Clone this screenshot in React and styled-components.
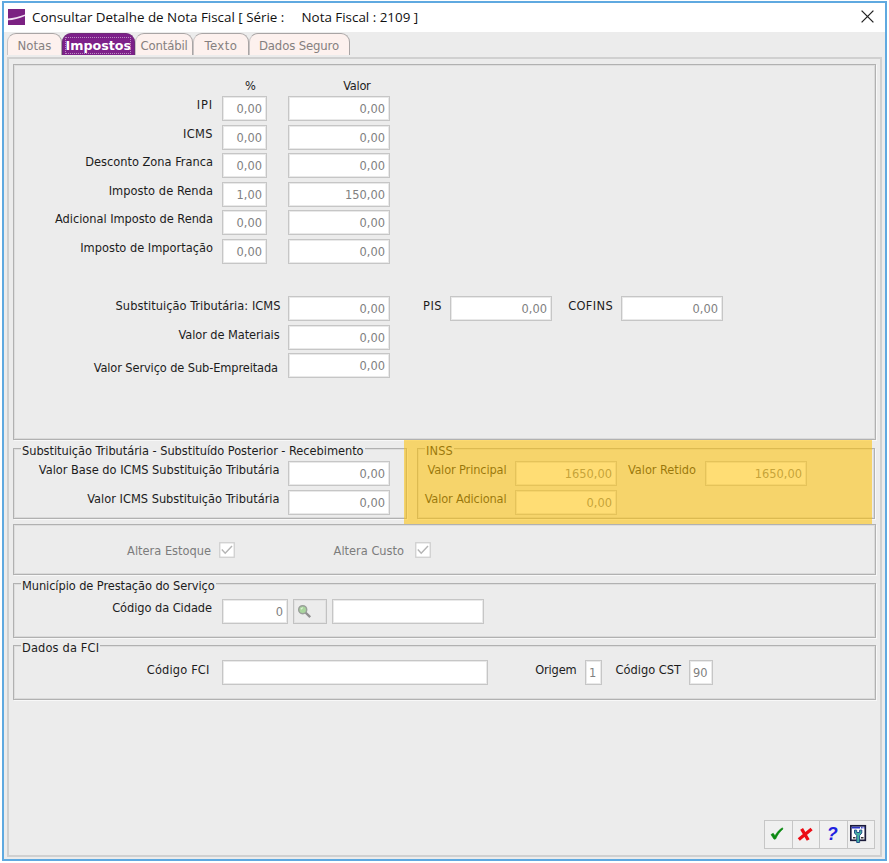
import React from 'react';
import styled, { createGlobalStyle } from 'styled-components';

const GlobalStyle = createGlobalStyle`
  * { box-sizing: border-box; }
  body { margin: 0; background: #fff; overflow: hidden; }
`;

const Window = styled.div`
  width: 885px;
  height: 860px;
  margin: 1px 0 0 2px;
  border: 2px solid #5fa9e0;
  background: #ececec;
  display: flex;
  flex-direction: column;
  font: 12.7px/16px "DejaVu Sans Condensed", "DejaVu Sans", sans-serif;
  color: #1c1c1c;
  white-space: pre;
`;

const TitleBar = styled.header`
  height: 29px;
  flex: none;
  background: #fff;
  display: flex;
  align-items: center;
  padding: 0 11px 0 4px;
  font: 13.4px/20px "Open Sans", "Noto Sans", sans-serif;
  color: #111;
`;

const Title = styled.span`
  width: ${p => p.$w}px;
  padding-bottom: 2px;
`;

const LogoIcon = styled.svg`
  width: 17px;
  height: 16px;
  margin: -2px 7px 0 0;
`;

const CloseIcon = styled.svg`
  width: 13px;
  height: 13px;
  margin: -2px 0 0 auto;
`;

const Tabs = styled.nav`
  height: 25px;
  flex: none;
  display: flex;
  padding: 1px 0 0 3px;
`;

const Tab = styled.div`
  position: relative;
  width: ${p => p.$w}px;
  height: 22px;
  padding: 4px 0 0 ${p => p.$pad}px;
  border: 1.5px solid ${p => (p.$active ? '#6e2a78' : '#a9a5a5')};
  border-bottom: 0;
  border-left-color: ${p => (p.$active ? '#6e2a78' : '#c9c4c4')};
  border-radius: 9px 9px 0 0;
  background: ${p => (p.$active ? '#7d2089' : '#fdf1ee')};
  color: ${p => (p.$active ? '#fff' : '#858080')};
  font-size: 13px;
  letter-spacing: ${p => p.$ls || 0}px;
  ${p => p.$active && `
    font-family: "DejaVu Sans", sans-serif;
    font-weight: bold;
    font-size: 12.7px;
    &::after {
      content: '';
      position: absolute;
      inset: 3px 3px 1px 2px;
      border: 1px dotted #b98cc0;
    }
  `}
`;

const Page = styled.main`
  width: 875px;
  height: 800px;
  margin-left: 3px;
  padding: 5px 4px 0 4px;
  border: 2px solid #d0d0d0;
  display: flex;
  flex-direction: column;
`;

const Panel = styled.section`
  position: relative;
  width: ${p => p.$w || 863}px;
  height: ${p => p.$h}px;
  flex: none;
  margin-top: ${p => p.$mt || 0}px;
  padding-top: ${p => p.$pt || 0}px;
  border: 1px solid #b1b1b1;
  box-shadow: inset 1px 1px 0 #dedede, inset -1px -1px 0 #dadada, 1px 1px 0 #f8f8f8;
`;

const Legend = styled.span`
  position: absolute;
  top: -6px;
  left: 7px;
  padding: 0 1px;
  background: #ececec;
  letter-spacing: ${p => p.$ls || 0}px;
`;

const PanelRow = styled.div`
  display: flex;
  gap: 10px;
`;

const Row = styled.div`
  display: flex;
  align-items: flex-start;
  height: ${p => p.$h || 28.5}px;
`;

const Label = styled.label`
  width: ${p => p.$w}px;
  margin: ${p => p.$mt ?? 1}px ${p => p.$gap ?? 9}px 0 0;
  text-align: right;
  letter-spacing: ${p => p.$ls || 0}px;
  color: ${p => (p.$muted ? '#7c7c7c' : 'inherit')};
`;

const Field = styled.div`
  width: ${p => p.$w}px;
  height: 25px;
  flex: none;
  margin-right: ${p => p.$gap || 0}px;
  padding: 4px 4px 0 3px;
  border: 1px solid #c6c6c6;
  box-shadow: inset 0 0 0 1px #e9e9e9;
  background: #fff;
  color: #808080;
  text-align: ${p => (p.$left ? 'left' : 'right')};
`;

const Headings = styled.div`
  display: flex;
  height: 18px;
`;

const Heading = styled.span`
  width: ${p => p.$w}px;
  text-align: right;
  letter-spacing: -0.3px;
`;

const Highlight = styled.div`
  position: absolute;
  left: -14px;
  top: -9px;
  width: 468px;
  height: 85px;
  background: rgba(255, 193, 2, 0.55);
`;

const CheckBox = styled.svg`
  width: 16px;
  height: 16px;
  flex: none;
`;

const LookupButton = styled.div`
  width: 34px;
  height: 25px;
  margin-right: 5px;
  padding: 4px 0 0 3px;
  border: 1px solid #c2c2c2;
  box-shadow: inset 0 0 0 1px #e2e2e2;
`;

const Actions = styled.footer`
  display: flex;
  width: 111px;
  height: 29px;
  margin: auto 1px 6px auto;
  border: 1px solid #c6c6c6;
  background: #f0f0f0;
`;

const Action = styled.div`
  flex: 1;
  display: flex;
  align-items: center;
  justify-content: center;
  padding: 0 2px 2px 0;
  & + & { border-left: 1px solid #c6c6c6; }
`;

const HelpMark = styled.span`
  font: italic bold 18px/20px "Liberation Sans", sans-serif;
  color: #2020e0;
`;

const TAXES = [
  ['IPI', '0,00', '0,00', 0.9],
  ['ICMS', '0,00', '0,00', 0.4],
  ['Desconto Zona Franca', '0,00', '0,00', 0],
  ['Imposto de Renda', '1,00', '150,00', 0.05],
  ['Adicional Imposto de Renda', '0,00', '0,00', -0.04],
  ['Imposto de Importação', '0,00', '0,00', 0],
];

const Checked = () => (
  <CheckBox viewBox="0 0 16 16">
    <rect x="0.75" y="0.75" width="14.5" height="14.5" fill="#fff" stroke="#cfcfcf" strokeWidth="1.3" />
    <path d="M2.8 7.6 6.2 11.2 13 4" fill="none" stroke="#b4b4b4" strokeWidth="1.4" />
  </CheckBox>
);

export default function App() {
  return (
    <>
      <GlobalStyle />
      <Window>
        <TitleBar>
          <LogoIcon viewBox="0 0 17 16">
            <rect width="17" height="16" fill="#7b2182" />
            <path d="M0 9.600C5 9.400 11 7.600 17 5.600v1.300C11 9.400 5 11 0 11.200z" fill="#f1dff2" />
          </LogoIcon>
          <Title $w={269.5}>Consultar Detalhe de Nota Fiscal [ Série :</Title>
          <Title $w={120}>Nota Fiscal : 2109 ]</Title>
          <CloseIcon viewBox="0 0 13 13">
            <path d="M0.6 0.6 12.4 12.4M12.4 0.6 0.6 12.4" stroke="#222" strokeWidth="1.3" />
          </CloseIcon>
        </TitleBar>

        <Tabs>
          <Tab $w={55} $pad={9.5}>Notas</Tab>
          <Tab $w={73} $pad={2.5} $active>Impostos</Tab>
          <Tab $w={58} $pad={4.5} $ls={-0.15}>Contábil</Tab>
          <Tab $w={56} $pad={10.5} $ls={0.45}>Texto</Tab>
          <Tab $w={101} $pad={9} $ls={-0.15}>Dados Seguro</Tab>
        </Tabs>

        <Page>
          <Panel $h={376} $pt={13}>
            <Headings>
              <Heading $w={241.5}>%</Heading>
              <Heading $w={115}>Valor</Heading>
            </Headings>
            {TAXES.map(([name, pct, value, ls]) => (
              <Row key={name}>
                <Label $w={199} $gap={9} $ls={ls}>{name}</Label>
                <Field $w={45} $gap={21}>{pct}</Field>
                <Field $w={102}>{value}</Field>
              </Row>
            ))}
            <Row $h={29} />
            <Row>
              <Label $w={266.5} $gap={7.5} $ls={0.04} $mt={2}>Substituição Tributária: ICMS</Label>
              <Field $w={102} $gap={32}>0,00</Field>
              <Label $w={20} $gap={8} $ls={0.5} $mt={2}>PIS</Label>
              <Field $w={102} $gap={15}>0,00</Field>
              <Label $w={46} $gap={8} $ls={0.35} $mt={2}>COFINS</Label>
              <Field $w={102}>0,00</Field>
            </Row>
            <Row>
              <Label $w={265.5} $gap={8.5} $ls={-0.09} $mt={2}>Valor de Materiais</Label>
              <Field $w={102}>0,00</Field>
            </Row>
            <Row>
              <Label $w={264} $gap={10} $ls={-0.11} $mt={7}>Valor Serviço de Sub-Empreitada</Label>
              <Field $w={102}>0,00</Field>
            </Row>
          </Panel>

          <PanelRow>
            <Panel $w={394} $h={71} $mt={8} $pt={12}>
              <Legend $ls={-0.04}>Substituição Tributária - Substituído Posterior - Recebimento</Legend>
              <Row>
                <Label $w={265.5} $gap={8.5} $ls={-0.02}>Valor Base do ICMS Substituição Tributária</Label>
                <Field $w={102}>0,00</Field>
              </Row>
              <Row>
                <Label $w={265.5} $gap={8.5}>Valor ICMS Substituição Tributária</Label>
                <Field $w={102}>0,00</Field>
              </Row>
            </Panel>
            <Panel $w={458} $h={71} $mt={8} $pt={12}>
              <Legend $ls={0.15}>INSS</Legend>
              <Row>
                <Label $w={88.5} $gap={8.5} $ls={-0.13}>Valor Principal</Label>
                <Field $w={102} $gap={11}>1650,00</Field>
                <Label $w={68} $gap={9} $ls={-0.05}>Valor Retido</Label>
                <Field $w={102}>1650,00</Field>
              </Row>
              <Row>
                <Label $w={88.5} $gap={8.5} $ls={-0.15}>Valor Adicional</Label>
                <Field $w={102}>0,00</Field>
              </Row>
              <Highlight />
            </Panel>
          </PanelRow>

          <Panel $h={51} $mt={5} $pt={17}>
            <Row>
              <Label $w={197} $gap={8} $muted>Altera Estoque</Label>
              <Checked />
              <Label $w={169} $gap={11} $muted>Altera Custo</Label>
              <Checked />
            </Row>
          </Panel>

          <Panel $h={55} $mt={8} $pt={15}>
            <Legend $ls={-0.08}>Município de Prestação do Serviço</Legend>
            <Row>
              <Label $w={198} $gap={10} $ls={-0.06}>Código da Cidade</Label>
              <Field $w={66} $gap={5}>0</Field>
              <LookupButton>
                <svg width="16" height="16" viewBox="0 0 16 16">
                  <path d="M8.5 8.5 13.2 13.2" stroke="#8f8f8f" strokeWidth="2.4" />
                  <circle cx="5.7" cy="5.7" r="4" fill="#a9d69d" stroke="#9a9f9a" strokeWidth="1.5" />
                  <path d="M3.8 5.2 5.8 3.6" stroke="#e0f1da" strokeWidth="1.2" />
                </svg>
              </LookupButton>
              <Field $w={152} />
            </Row>
          </Panel>

          <Panel $h={55} $mt={7} $pt={14}>
            <Legend $ls={0.15}>Dados da FCI</Legend>
            <Row>
              <Label $w={195.5} $gap={12.5} $ls={0.15} $mt={2}>Código FCI</Label>
              <Field $w={266} $gap={47} />
              <Label $w={41.5} $gap={8.5} $ls={-0.15} $mt={2}>Origem</Label>
              <Field $w={17} $gap={12} $left>1</Field>
              <Label $w={67} $gap={8} $mt={2}>Código CST</Label>
              <Field $w={24} $left>90</Field>
            </Row>
          </Panel>

          <Actions>
            <Action>
              <svg width="16" height="16" viewBox="0 0 16 16">
                <path d="M2 8.600 4.200 7.200 6 9.800C8 6.200 10.400 3.600 13.400 1.800L14 3C11 5.600 8.600 8.600 6.600 13L5 13.200Z" fill="#0b8a12" stroke="#0b8a12" strokeWidth="0.6" />
              </svg>
            </Action>
            <Action>
              <svg width="16" height="16" viewBox="0 0 16 16">
                <path d="M4.600 2.800 11.200 14M14.600 3 1.800 13.600" fill="none" stroke="#ec0d16" strokeWidth="3.300" />
              </svg>
            </Action>
            <Action>
              <HelpMark>?</HelpMark>
            </Action>
            <Action>
              <svg width="20" height="20" viewBox="0 0 20 20">
                <rect x="0.800" y="1.800" width="14.500" height="14.500" fill="#fff" stroke="#1b1b3a" strokeWidth="1.700" />
                <path d="M1.600 3.600H14.600" stroke="#2b35c8" strokeWidth="1.600" strokeDasharray="8.500 1 1.500 1" />
                <path d="M3 13.800h2.500M11 13.800h2.500" stroke="#333" strokeWidth="1.400" />
                <path d="M4.500 6v3L6.700 11.500v7h2.900v-7l2.200-2.500V6l-2.200.2v2.300H6.700V6.200z" fill="#45b3a0" stroke="#23508c" strokeWidth="1" />
              </svg>
            </Action>
          </Actions>
        </Page>
      </Window>
    </>
  );
}
